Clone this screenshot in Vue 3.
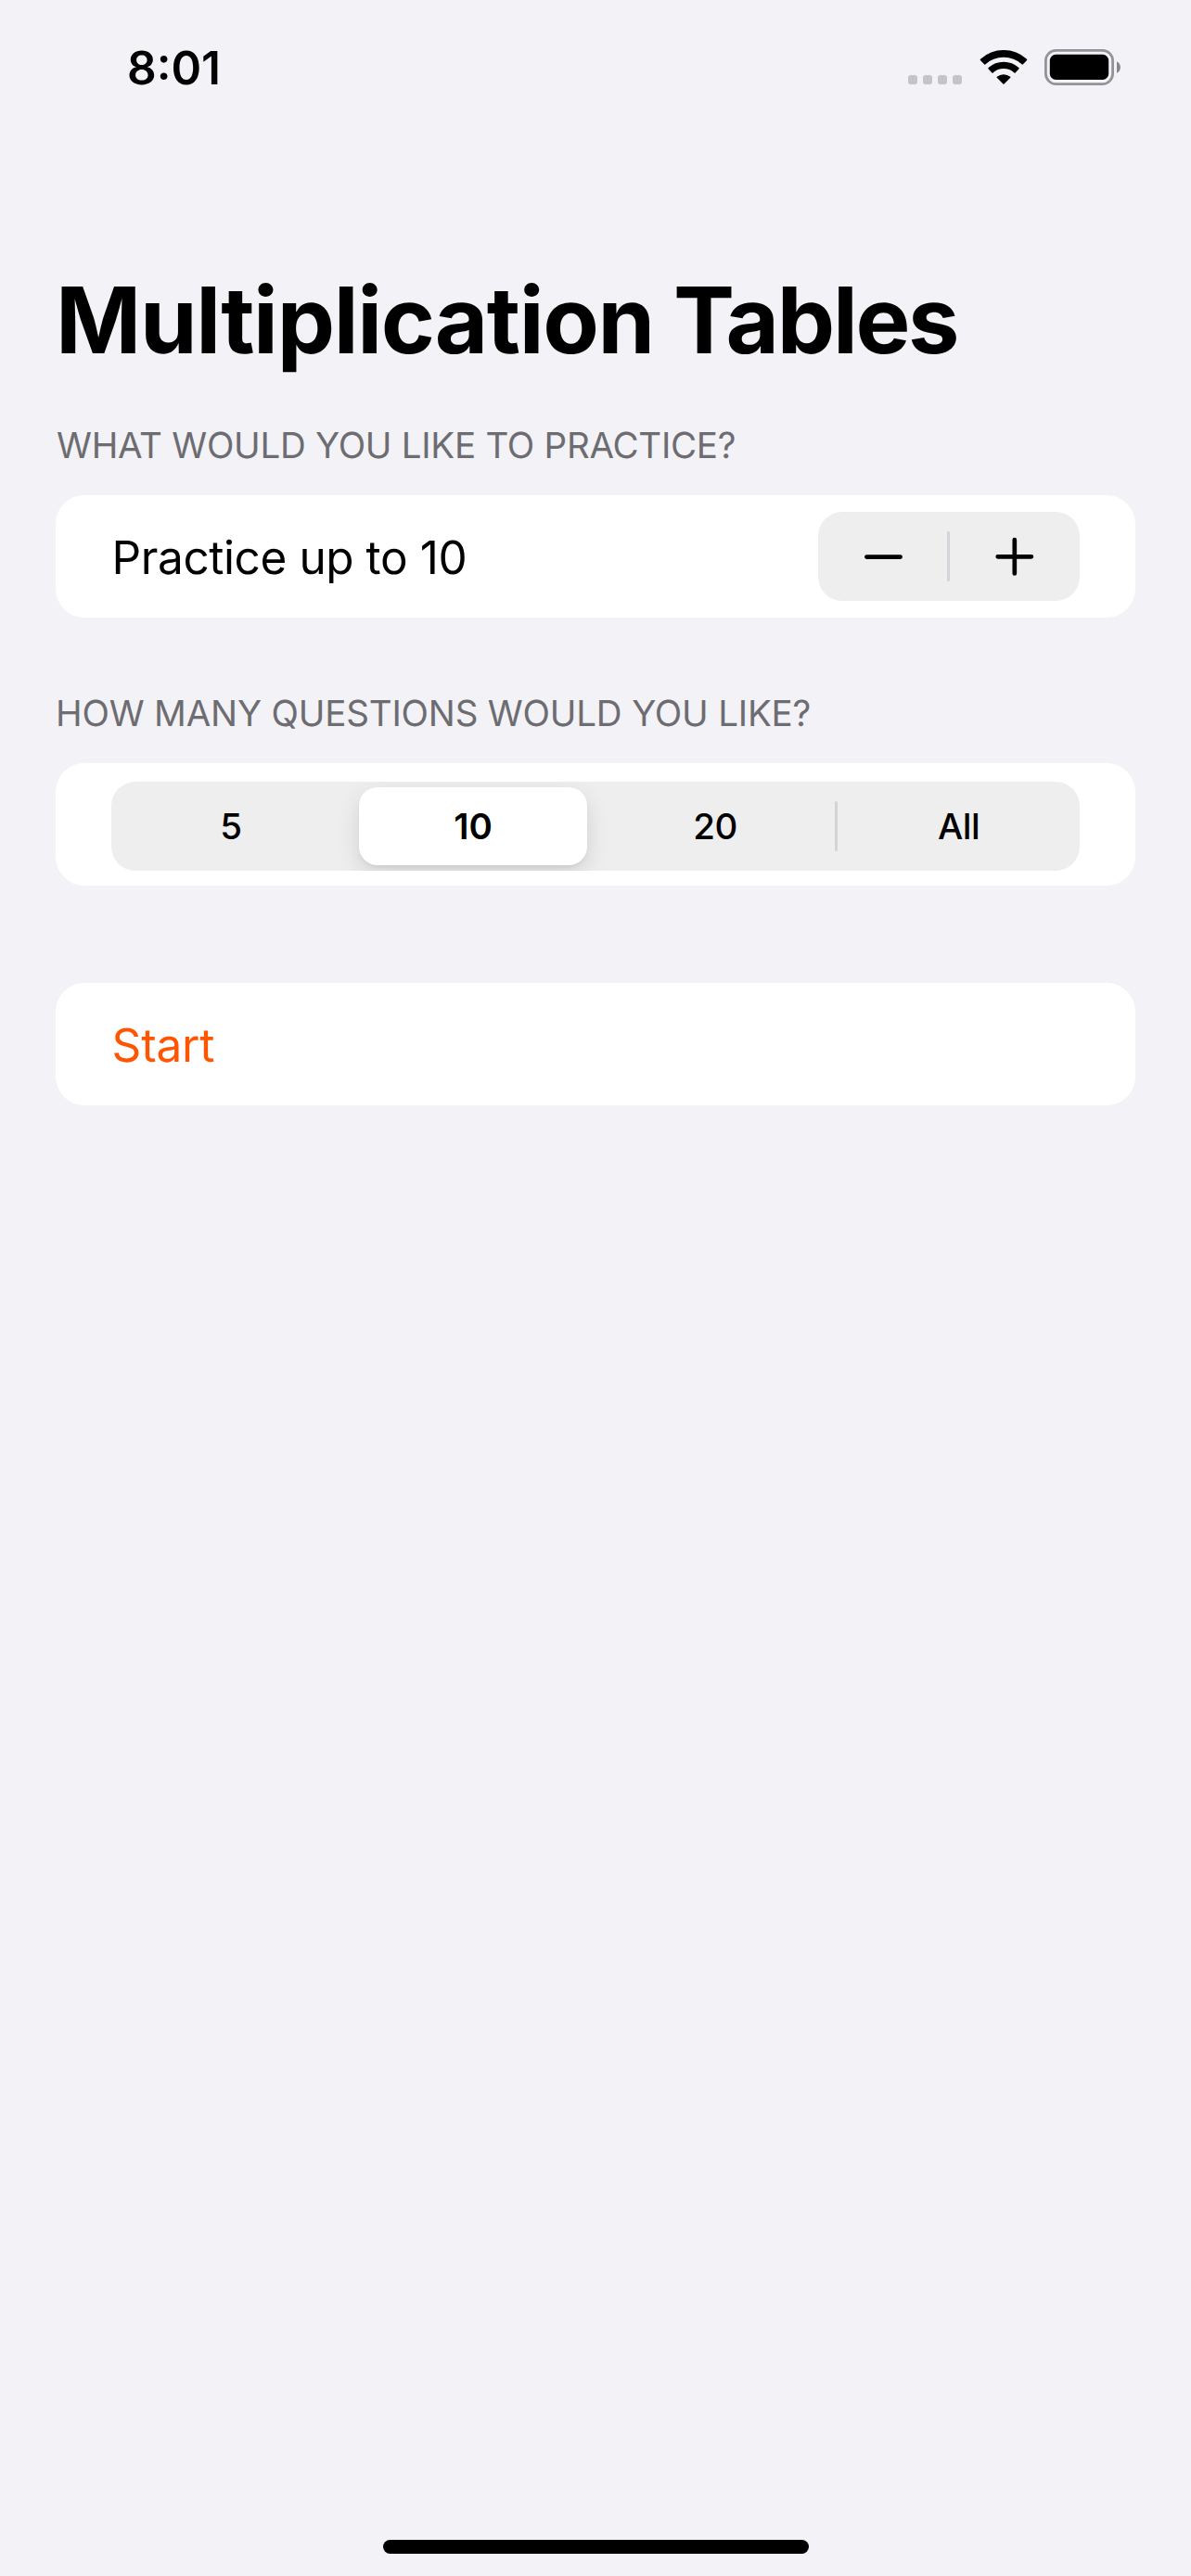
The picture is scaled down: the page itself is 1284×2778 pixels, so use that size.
<script setup>
import { ref } from 'vue'

const limit = ref(10)
const amounts = ['5', '10', '20', 'All']
const selected = ref('10')
</script>

<template>
  <div class="screen">
    <header class="status">
      <span class="time">8:01</span>
      <div class="indicators">
        <div class="signal"><i v-for="n in 4" :key="n"></i></div>
        <svg class="wifi" width="54" height="42" viewBox="-27 -39 54 42">
          <path d="M-24.5-26.6A36.2 36.2 0 0 1 24.5-26.6L20.4-22.2A30.2 30.2 0 0 0-20.4-22.2Z" />
          <path d="M-15.9-17.3A23.5 23.5 0 0 1 15.9-17.3L12.05-13.1A17.8 17.8 0 0 0-12.05-13.1Z" />
          <path d="M-6.7-7.7A10.7 10.7 0 0 1 6.7-7.7L0-1Z" />
        </svg>
        <svg class="battery" width="82" height="39" viewBox="0 0 82 39">
          <rect x="1.4" y="1.4" width="72.2" height="36.2" rx="11" fill="none" stroke="#949397" stroke-width="2.8" />
          <rect x="5.8" y="5.8" width="63.4" height="27.2" rx="6.5" fill="#000" />
          <path d="M78 13.2C83.2 15.6 83.2 23.4 78 25.8Z" fill="#87868a" />
        </svg>
      </div>
    </header>

    <main class="form">
      <h1><span>Multiplication</span> Tables</h1>

      <h2 class="practice">WHAT WOULD YOU LIKE TO PRACTICE?</h2>
      <section class="card">
        <span class="label">Practice up to {{ limit }}</span>
        <div class="stepper">
          <button aria-label="Decrement" @click="limit--">
            <svg width="42" height="42" viewBox="0 0 42 42"><path d="M3.4 21.6H39.6" /></svg>
          </button>
          <span class="divider"></span>
          <button aria-label="Increment" @click="limit++">
            <svg width="42" height="42" viewBox="0 0 42 42"><path d="M2.7 21.3H38.9M20.8 3.2V39.4" /></svg>
          </button>
        </div>
      </section>

      <h2 class="questions">HOW MANY QUESTIONS WOULD YOU LIKE?</h2>
      <section class="card picker">
        <div class="segments">
          <template v-for="(a, i) in amounts" :key="a">
            <span v-if="i" class="divider" :class="{ hidden: i < 3 }"></span>
            <button :class="{ on: a === selected }" @click="selected = a">{{ a }}</button>
          </template>
        </div>
      </section>

      <section class="card action">
        <span class="label start">Start</span>
      </section>
    </main>

    <div class="home"></div>
  </div>
</template>

<style>
body {
  background: #f2f2f7;
}
</style>

<style scoped>
.screen {
  box-sizing: border-box;
  display: flex;
  flex-direction: column;
  width: 1284px;
  height: 2778px;
  padding-bottom: 24px;
  background: #f2f2f7;
  color: #000;
  font-family: Inter, 'Liberation Sans', sans-serif;
  text-rendering: geometricPrecision;
}
.status {
  box-sizing: border-box;
  display: flex;
  justify-content: space-between;
  height: 141px;
  padding: 43px 76px 0 137px;
}
.time {
  font-size: 49.5px;
  font-weight: 600;
  line-height: 60px;
}
.indicators {
  display: flex;
  align-items: flex-start;
}
.signal {
  display: flex;
  gap: 6px;
  margin: 38px 17.6px 0 0;
}
.signal i {
  width: 10px;
  height: 10px;
  border-radius: 3px;
  background: #c4c3c8;
}
.wifi {
  margin: 9px 17.4px 0 0;
  stroke: #000;
  stroke-width: 1.6;
  stroke-linejoin: round;
}
.battery {
  margin-top: 10px;
}
.form {
  flex: 1;
  padding: 144px 60px 0;
}
h1 {
  margin: 0 0 50px;
  font-size: 99px;
  font-weight: 700;
  line-height: 120px;
  letter-spacing: -2.3px;
  white-space: nowrap;
}
h1 span {
  letter-spacing: -1.32px;
}
h2 {
  margin: 0 0 27px;
  color: #6d6c71;
  font-size: 38.5px;
  font-weight: 400;
  line-height: 52px;
  white-space: nowrap;
}
.practice {
  padding-left: 1px;
  letter-spacing: -0.26px;
}
.questions {
  letter-spacing: -0.18px;
}
.card {
  box-sizing: border-box;
  display: flex;
  align-items: center;
  justify-content: space-between;
  height: 132px;
  padding: 0 60px;
  border-radius: 31px;
  background: #fff;
}
.card + h2 {
  margin-top: 78px;
}
.label {
  padding: 2px 0 0 0.6px;
  font-size: 49.5px;
  line-height: 60px;
  letter-spacing: -0.42px;
}
.start {
  color: #ff5500;
  letter-spacing: -0.2px;
}
button {
  padding: 0;
  border: 0;
  background: none;
  color: inherit;
  font: inherit;
}
.stepper {
  display: grid;
  grid-template-columns: 139px 3px 140px;
  align-items: center;
  height: 96px;
  border-radius: 26px;
  background: #eeeeee;
}
.stepper button {
  display: flex;
  align-items: center;
  justify-content: center;
  height: 96px;
}
.stepper svg {
  fill: none;
  stroke: #000;
  stroke-width: 4.7;
  stroke-linecap: round;
}
.divider {
  width: 3px;
  height: 54px;
  border-radius: 1.5px;
  background: #d4d3d8;
}
.hidden {
  visibility: hidden;
}
.picker {
  align-items: flex-start;
  padding-top: 20px;
}
.segments {
  display: grid;
  grid-template-columns: 258px 3px 258px 3px 258px 3px 261px;
  align-items: center;
  height: 96px;
  overflow: hidden;
  border-radius: 26px;
  background: #eeeeee;
}
.segments button {
  height: 84px;
  margin: 0 6px;
  border-radius: 20px;
  font-size: 38.5px;
  font-weight: 500;
  line-height: 84px;
  letter-spacing: -0.5px;
}
.segments .on {
  background: #fff;
  box-shadow: 0 9px 24px rgba(0, 0, 0, 0.12), 0 3px 3px rgba(0, 0, 0, 0.04);
  font-weight: 600;
  letter-spacing: 0;
}
.action {
  margin-top: 105px;
}
.home {
  align-self: center;
  width: 459px;
  height: 15px;
  border-radius: 7.5px;
  background: #000;
}
</style>
